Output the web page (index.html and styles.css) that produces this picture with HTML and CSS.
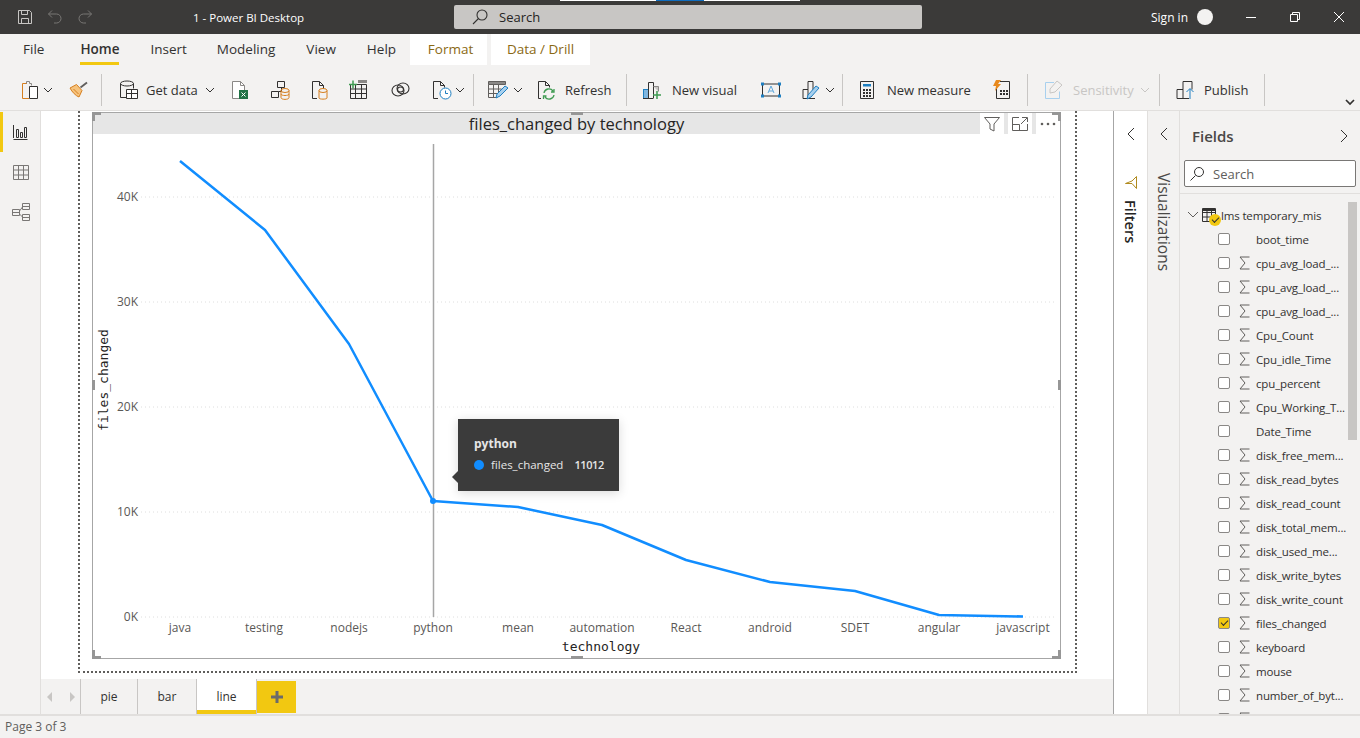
FILE: index.html
```html
<!DOCTYPE html>
<html lang="en">
<head>
    <meta charset="UTF-8">
    <title>1 - Power BI Desktop</title>
    <link rel="stylesheet" href="styles.css">
</head>
<body>
    <div class="titlebar">
        <div class="quick">
            <svg width="16" height="16" viewBox="0 0 16 16" fill="none" stroke="#c8c6c4"><path d="M1.500 1.500h11l2 2v11h-13z"/><path d="M4.500 1.500v4h6v-4M4.500 14.500v-5h7v5"/></svg>
            <svg width="16" height="16" viewBox="0 0 16 16" fill="none" stroke="#797775"><path d="M5 1.500 1.500 5 5 8.500M1.500 5h8a4.500 4.500 0 0 1 0 9H7"/></svg>
            <svg width="16" height="16" viewBox="0 0 16 16" fill="none" stroke="#797775"><path d="M11 1.500 14.500 5 11 8.500M14.500 5h-8a4.500 4.500 0 0 0 0 9H9"/></svg>
        </div>
        <div class="app-title">1 - Power BI Desktop</div>
        <div class="search-bar">
            <div class="capture-strip"><span></span></div>
            <svg width="16" height="16" viewBox="0 0 16 16" fill="none" stroke="#323130" stroke-width="1.100"><circle cx="10" cy="6" r="5"/><path d="M6.500 9.500 1 15"/></svg>
            <span>Search</span>
        </div>
        <div class="signin">Sign in <i class="avatar"></i></div>
        <div class="win-btns">
            <svg width="12" height="12" viewBox="0 0 12 12" stroke="#fff" fill="none"><path d="M1 6.500h10"/></svg>
            <svg width="12" height="12" viewBox="0 0 12 12" stroke="#fff" fill="none"><path d="M1.500 3.500h7v7h-7zM3.500 3.500v-2h7v7h-2"/></svg>
            <svg width="12" height="12" viewBox="0 0 12 12" stroke="#fff" fill="none"><path d="M1 1l10 10M11 1 1 11"/></svg>
        </div>
    </div>

    <div class="tabs">
        <a class="tab tab-file">File</a>
        <a class="tab tab-home active">Home</a>
        <a class="tab tab-insert">Insert</a>
        <a class="tab tab-model">Modeling</a>
        <a class="tab tab-view">View</a>
        <a class="tab tab-help">Help</a>
        <a class="ctx-tab ctx-format">Format</a>
        <a class="ctx-tab ctx-drill">Data / Drill</a>
    </div>

    <div class="ribbon">
        <div class="rb-group group-clip">
            <svg class="ic" width="18" height="20" viewBox="0 0 18 20" fill="none"><path d="M6 3.500H1.500v15H8" stroke="#d67f1f"/><path d="M5.500 3.500V1.500h3v2h2v2" stroke="#8a8886"/><path d="M8.500 6.500h8v12h-8z" stroke="#323130" fill="#fff"/></svg>
            <svg class="chev" width="10" height="6" viewBox="0 0 10 6"><path d="M1 1l4 4 4-4" fill="none" stroke="#323130"/></svg>
            <svg class="ic brush" width="19" height="17" viewBox="0 0 19 17" fill="none"><path d="M18 1.500 11.500 6.500" stroke="#605e5c" stroke-width="1.800"/><path d="M1 7 7.500 3.500 13 9.500 10 16C7 15 3 11 1 7z" fill="#f6c37d" stroke="#d67f1f"/><path d="M4.500 8l5 5" stroke="#d67f1f"/></svg>
        </div>
        <i class="sep"></i>
        <div class="rb-group group-data">
            <div class="rb-btn getdata">
                <svg class="ic" width="19" height="20" viewBox="0 0 19 20" fill="none" stroke="#323130"><ellipse cx="8" cy="3.500" rx="6.500" ry="2.500"/><path d="M1.500 3.500v14h6M14.500 3.500v5"/><path d="M7.500 9.500h11v9h-11zM7.500 13.500h11M12.500 9.500v9" fill="#fff"/></svg>
                <span>Get data</span>
                <svg class="chev" width="10" height="6" viewBox="0 0 10 6"><path d="M1 1l4 4 4-4" fill="none" stroke="#323130"/></svg>
            </div>
            <div class="icon-btn">
                <svg width="18" height="20" viewBox="0 0 18 20" fill="none"><path d="M1.500 1.500h8l4 4v13h-12z" stroke="#8a8886" fill="#fff"/><path d="M9.500 1.500v4h4" stroke="#8a8886"/><rect x="8" y="10" width="9" height="9" fill="#217346"/><path d="M10.500 12.500l4 4M14.500 12.500l-4 4" stroke="#fff"/></svg>
            </div>
            <div class="icon-btn">
                <svg width="20" height="20" viewBox="0 0 20 20" fill="none"><path d="M7.500 1.500h7v6h-7zM1.500 11.500h7v6h-7zM8.500 11.500h3v-4" stroke="#323130"/><ellipse cx="15" cy="10.500" rx="4" ry="2" stroke="#d67f1f"/><path d="M11 10.500v7c0 2.500 8 2.500 8 0v-7M11 14c0 2 8 2 8 0" stroke="#d67f1f"/></svg>
            </div>
            <div class="icon-btn">
                <svg width="18" height="20" viewBox="0 0 18 20" fill="none"><path d="M6 18.500H1.500v-17h7l4 4v3" stroke="#323130"/><path d="M8.500 1.500v4h4" stroke="#323130"/><ellipse cx="12" cy="10.500" rx="4" ry="2" stroke="#d67f1f"/><path d="M8 10.500v7.500c0 1.500 8 1.500 8 0v-7.500" stroke="#d67f1f"/></svg>
            </div>
            <div class="icon-btn shift-left">
                <svg width="19" height="19" viewBox="0 0 19 19" fill="none"><path d="M1.500 4.500h16v14h-16zM1.500 9h16M1.500 13.500h16M6.500 4.500v14M12.500 4.500v14" stroke="#323130"/><path d="M9 1.500h9" stroke="#8a8886" stroke-width="3"/><path d="M0 4.500h8M4 .5v8" stroke="#3f9b52" stroke-width="1.500"/></svg>
            </div>
            <div class="icon-btn">
                <svg width="19" height="15" viewBox="0 0 19 15" fill="none" stroke="#323130" stroke-width="1.100"><ellipse cx="7" cy="8.500" rx="6" ry="5.500"/><ellipse cx="12" cy="6.500" rx="6" ry="5.500"/><ellipse cx="9.500" cy="7.500" rx="3" ry="2.500"/></svg>
            </div>
            <div class="rb-btn refresh-sched">
                <svg width="20" height="20" viewBox="0 0 20 20" fill="none"><path d="M6 18.500H1.500v-17h7l4 4v2" stroke="#323130"/><path d="M8.500 1.500v4h4" stroke="#323130"/><circle cx="13.500" cy="13.500" r="5.500" stroke="#1e7fc1" fill="#fff"/><path d="M13.500 10.500v3h2.500" stroke="#1e7fc1"/></svg>
                <svg class="chev" width="10" height="6" viewBox="0 0 10 6"><path d="M1 1l4 4 4-4" fill="none" stroke="#323130"/></svg>
            </div>
        </div>
        <i class="sep"></i>
        <div class="rb-group group-query">
            <div class="rb-btn">
                <svg width="21" height="19" viewBox="0 0 21 19" fill="none"><path d="M1.500 1.500h17v3h-17z" fill="#8a8886" stroke="#605e5c"/><path d="M1.500 4.500v13h9M1.500 9h13M1.500 13.500h9M6.500 4.500v13M11.500 4.500v9" stroke="#605e5c"/><path d="M9 18l1-4 8-8 3 2-8 8z" fill="#a8d0ee" stroke="#1e7fc1"/></svg>
                <svg class="chev" width="10" height="6" viewBox="0 0 10 6"><path d="M1 1l4 4 4-4" fill="none" stroke="#323130"/></svg>
            </div>
            <div class="rb-btn refresh">
                <svg width="19" height="20" viewBox="0 0 19 20" fill="none"><path d="M4 18.500H1.500v-17h7l4 4v2" stroke="#323130"/><path d="M8.500 1.500v4h4" stroke="#323130"/><path d="M7 13a5 5 0 0 1 9-2M17 9v3h-3M17 15a5 5 0 0 1-9 2M6.500 19v-3h3" stroke="#3f9b52" stroke-width="1.300"/></svg>
                <span>Refresh</span>
            </div>
        </div>
        <i class="sep"></i>
        <div class="rb-group group-insert">
            <div class="rb-btn newvisual">
                <svg width="20" height="20" viewBox="0 0 20 20" fill="none"><rect x=".5" y="9.500" width="5" height="9" fill="#7fb6e0" stroke="#1e7fc1"/><path d="M5.500 18.500v-16h5v16" stroke="#323130"/><path d="M10.500 6.500h5v5" stroke="#8a8886" fill="#c8c6c4"/><path d="M14 11v8M10 15h8" stroke="#3f9b52" stroke-width="1.500"/><path d="M0 18.500h10" stroke="#323130"/></svg>
                <span>New visual</span>
            </div>
            <div class="icon-btn textbox">
                <svg width="20" height="16" viewBox="0 0 20 16" fill="none"><path d="M1.500 2h17v12h-17z" stroke="#323130"/><rect width="3" height="3" y=".5" fill="#1e7fc1"/><rect x="17" y=".5" width="3" height="3" fill="#1e7fc1"/><rect y="12.500" width="3" height="3" fill="#1e7fc1"/><rect x="17" y="12.500" width="3" height="3" fill="#1e7fc1"/><path d="M7 11 10 4l3 7M8 9h4" stroke="#5ea7dc"/></svg>
            </div>
            <div class="rb-btn editvisual">
                <svg width="19" height="20" viewBox="0 0 19 20" fill="none"><path d="M1 18.500V9.500h5v9zM6 9.500v-8h5v9M1 18.500h12" stroke="#323130"/><path d="M5 19l1-4 8-9 3 2-8 9z" fill="#a8d0ee" stroke="#1e7fc1"/></svg>
                <svg class="chev" width="10" height="6" viewBox="0 0 10 6"><path d="M1 1l4 4 4-4" fill="none" stroke="#323130"/></svg>
            </div>
        </div>
        <i class="sep"></i>
        <div class="rb-group group-calc">
            <div class="rb-btn measure">
                <svg width="14" height="18" viewBox="0 0 14 18" fill="none"><path d="M.5.500h13v17H.5z" stroke="#323130"/><path d="M3 3h8v2.500H3z" fill="#1e7fc1"/><path d="M3 8h2v2H3zM6 8h2v2H6zM9 8h2v2H9zM3 11h2v2H3zM6 11h2v2H6zM9 11h2v2H9zM3 14h2v2H3zM6 14h2v2H6zM9 14h2v2H9z" fill="#323130"/></svg>
                <span>New measure</span>
            </div>
            <div class="icon-btn quickmeasure">
                <svg width="18" height="19" viewBox="0 0 18 19" fill="none"><path d="M4.500 6.500v12h13V1.500H8" stroke="#323130"/><path d="M8 10h2v2H8zM11 10h2v2h-2zM14 10h2v2h-2zM8 13h2v2H8zM11 13h2v2h-2zM14 13h2v2h-2z" fill="#323130"/><path d="M4 0h5L6 4h3l-6 7 1-5H1z" fill="#e8891c"/></svg>
            </div>
        </div>
        <i class="sep"></i>
        <div class="rb-group group-sens">
            <div class="rb-btn sensitivity">
                <svg width="18" height="19" viewBox="0 0 18 19" fill="none" stroke="#a8d0ee"><path d="M9 2.500H.5v16h14v-7"/><path d="M5 9l7-8 5 4-7 7-5 1z" stroke="#c8c6c4"/></svg>
                <span>Sensitivity</span>
                <svg class="chev" width="10" height="6" viewBox="0 0 10 6"><path d="M1 1l4 4 4-4" fill="none" stroke="#c8c6c4"/></svg>
            </div>
        </div>
        <i class="sep"></i>
        <div class="rb-group group-share">
            <div class="rb-btn publish">
                <svg width="20" height="18" viewBox="0 0 20 18" fill="none"><path d="M1 17.500v-9h6v9zM7 8.500V.5h9v8M7 17.500h6" stroke="#323130"/><path d="M14 18V8M10.500 11 14 7.500l3.500 3.500" stroke="#1e7fc1"/></svg>
                <span>Publish</span>
            </div>
        </div>
        <i class="sep"></i>
        <svg class="collapse" width="10" height="7" viewBox="0 0 10 7"><path d="M1 1l4 4 4-4" fill="none" stroke="#323130" stroke-width="1.700"/></svg>
    </div>

    <div class="main">
        <div class="sidebar">
            <div class="side-btn active">
                <svg width="15" height="15" viewBox="0 0 15 15" fill="none" stroke="#323130"><path d="M.5 0v13M.5 14.500h14M3.500 4.500h2v8h-2zM7.500 7.500h2v5h-2zM11.500 2.500h2v10h-2z"/></svg>
            </div>
            <div class="side-btn">
                <svg width="16" height="15" viewBox="0 0 16 15" fill="none" stroke="#797775"><path d="M.5.500h15v14H.5zM.5 5h15M.5 10h15M5.500.5v14M10.500.5v14"/></svg>
            </div>
            <div class="side-btn">
                <svg width="18" height="18" viewBox="0 0 18 18" fill="none" stroke="#797775"><path d="M.5 6.500h7v6h-7zM10.500.5h7v6h-7zM10.500 11.500h7v6h-7zM.5 9.500h7M10.500 3.500h7M10.500 14.500h7M7.500 8l3-4M7.500 11l3 3"/></svg>
            </div>
        </div>

        <div class="workspace">
            <div class="canvas">
                <div class="page">
                    <div class="visual">
                        <div class="vis-head">
                            <div class="vis-title">files_changed by technology</div>
                            <div class="vis-icons">
                                <span class="vis-ic"><svg width="16" height="16" viewBox="0 0 16 16" fill="none" stroke="#605e5c"><path d="M.5 1.500h15L10 8v7l-4-2V8z"/></svg></span>
                                <span class="vis-ic"><svg width="16" height="14" viewBox="0 0 16 14" fill="none" stroke="#605e5c"><path d="M7 .5H.5v13h15V7M.5 7.500h7v6M10 .5h5.500V5M15 1 9 7"/></svg></span>
                                <span class="vis-ic"><svg width="16" height="4" viewBox="0 0 16 4" fill="#605e5c"><circle cx="2" cy="2" r="1.300"/><circle cx="8" cy="2" r="1.300"/><circle cx="14" cy="2" r="1.300"/></svg></span>
                            </div>
                        </div>
                        <svg class="chart" width="968" height="524" viewBox="92 134 968 524">
                            <g class="grid">
                                <line x1="141" x2="1056" y1="197" y2="197"/>
                                <line x1="141" x2="1056" y1="302" y2="302"/>
                                <line x1="141" x2="1056" y1="407" y2="407"/>
                                <line x1="141" x2="1056" y1="512" y2="512"/>
                                <line x1="141" x2="1056" y1="617" y2="617"/>
                            </g>
                            <g class="y-labels">
                                <text x="138" y="201">40K</text>
                                <text x="138" y="306">30K</text>
                                <text x="138" y="411">20K</text>
                                <text x="138" y="516">10K</text>
                                <text x="138" y="621">0K</text>
                            </g>
                            <g class="x-labels">
                                <text x="180" y="632">java</text>
                                <text x="264" y="632">testing</text>
                                <text x="349" y="632">nodejs</text>
                                <text x="433" y="632">python</text>
                                <text x="518" y="632">mean</text>
                                <text x="602" y="632">automation</text>
                                <text x="686" y="632">React</text>
                                <text x="770" y="632">android</text>
                                <text x="855" y="632">SDET</text>
                                <text x="939" y="632">angular</text>
                                <text x="1023" y="632">javascript</text>
                            </g>
                            <text class="axis-title" x="601" y="651">technology</text>
                            <text class="axis-title" transform="translate(108 380) rotate(-90)">files_changed</text>
                            <line class="cursor" x1="433.500" x2="433.500" y1="144" y2="617"/>
                            <polyline class="series" points="180,161 265,230 349,344 433,501 518,507 602,525 686,560 770,582 855,591 939,615 1023,616.500"/>
                            <circle cx="433" cy="501" r="3" fill="#118dff"/>
                        </svg>
                        <i class="handle h-tl"></i><i class="handle h-tr"></i><i class="handle h-bl"></i><i class="handle h-br"></i>
                        <i class="mid-handle m-l"></i><i class="mid-handle m-r"></i>
                        <i class="mid-handle-h m-t"></i><i class="mid-handle-h m-b"></i>
                        <div class="tooltip">
                            <div class="tip-title">python</div>
                            <div class="tip-row"><i class="tip-dot"></i><span>files_changed</span><b>11012</b></div>
                        </div>
                    </div>
                </div>
            </div>
            <div class="page-tabs">
                <div class="page-nav">
                    <svg width="6" height="10" viewBox="0 0 6 10"><path d="M5 0v10L0 5z" fill="#c8c6c4"/></svg>
                    <svg width="6" height="10" viewBox="0 0 6 10"><path d="M1 0v10l5-5z" fill="#c8c6c4"/></svg>
                </div>
                <a class="page-tab tab-pie">pie</a>
                <a class="page-tab tab-bar">bar</a>
                <a class="page-tab tab-line">line</a>
                <a class="add-page">
                    <svg width="12" height="12" viewBox="0 0 12 12"><path d="M6 0v12M0 6h12" stroke="#6b6b6b" stroke-width="3"/></svg>
                </a>
            </div>
        </div>

        <div class="pane-filters">
            <svg class="pane-chev" width="8" height="14" viewBox="0 0 8 14"><path d="M7 1 1 7l6 6" fill="none" stroke="#323130"/></svg>
            <svg class="funnel" width="12" height="13" viewBox="0 0 12 13" fill="none" stroke="#b08a1e"><path d="M11.500.5v12L7 7.500H.5L7 5z"/></svg>
            <div class="vert-label strong">Filters</div>
        </div>
        <div class="pane-viz">
            <svg class="pane-chev" width="8" height="14" viewBox="0 0 8 14"><path d="M7 1 1 7l6 6" fill="none" stroke="#323130"/></svg>
            <div class="vert-label">Visualizations</div>
        </div>

        <div class="pane-fields">
            <div class="fields-head">
                <span>Fields</span>
                <svg width="8" height="14" viewBox="0 0 8 14"><path d="M1 1l6 6-6 6" fill="none" stroke="#323130"/></svg>
            </div>
            <div class="field-search">
                <svg width="14" height="14" viewBox="0 0 14 14" fill="none" stroke="#323130"><circle cx="9" cy="5" r="4.500"/><path d="M5.500 8.500 .5 13.500"/></svg>
                <span>Search</span>
            </div>
            <div class="field-tree">
                <div class="table-row">
                    <svg width="12" height="8" viewBox="0 0 12 8"><path d="M1 1l5 5 5-5" fill="none" stroke="#605e5c"/></svg>
                    <span class="table-ic">
                        <svg width="14" height="14" viewBox="0 0 14 14" fill="none" stroke="#323130"><path d="M.5.500h13v13H.5zM.5 4.500h13M.5 9h13M5 .5v13M9.500.5v13"/><path d="M.5 2h13" stroke-width="2"/></svg>
                        <i class="table-badge"></i>
                    </span>
                    <span>lms temporary_mis</span>
                </div>
                <div id="fieldRows"></div>
                <div class="scroll-thumb"></div>
            </div>
        </div>
    </div>

    <div class="statusbar">Page 3 of 3</div>

    <script src="fields.js"></script>
</body>
</html>
```

FILE: fields.js
```js
// field list of the lms temporary_mis table: [name, has sigma, checked]
const fields = [
    ['boot_time', false], ['cpu_avg_load_...', true], ['cpu_avg_load_...', true],
    ['cpu_avg_load_...', true], ['Cpu_Count', true], ['Cpu_idle_Time', true],
    ['cpu_percent', true], ['Cpu_Working_T...', true], ['Date_Time', false],
    ['disk_free_mem...', true], ['disk_read_bytes', true], ['disk_read_count', true],
    ['disk_total_mem...', true], ['disk_used_me...', true], ['disk_write_bytes', true],
    ['disk_write_count', true], ['files_changed', true, true], ['keyboard', true],
    ['mouse', true], ['number_of_byt...', true], ['', true]
];

const sigmaIcon = '<svg width="11" height="14" viewBox="0 0 11 14" fill="none" stroke="#605e5c"><path d="M10.500 1H1l5 6-5 6h9.500"/></svg>';

const box = document.getElementById('fieldRows');
fields.forEach(function (f) {
    const row = document.createElement('div');
    row.className = 'field-row';
    const check = document.createElement('i');
    check.className = f[2] ? 'check checked' : 'check';
    const sigma = document.createElement('span');
    sigma.className = 'sigma';
    sigma.innerHTML = f[1] ? sigmaIcon : '';
    const name = document.createElement('span');
    name.innerText = f[0];
    row.append(check, sigma, name);
    box.appendChild(row);
});
```

FILE: styles.css
```css
* { box-sizing: border-box; }
html, body { height: 100%; }
body { margin: 0; height: 738px; overflow: hidden; display: flex; flex-direction: column; background: #f3f2f1; color: #323130; font-family: "Open Sans", "Noto Sans", sans-serif; font-size: 13px; }
i { display: block; }
svg { display: block; flex: none; }

/* title bar */
.titlebar { height: 34px; flex: none; background: #3b3a39; color: #fff; display: flex; align-items: center; }
.quick { display: flex; gap: 14px; margin-left: 17px; width: 176px; }
.app-title { width: 261px; font-size: 11.500px; }
.search-bar { position: relative; width: 468px; height: 24px; background: #c8c6c4; border-radius: 2px; display: flex; align-items: center; gap: 11px; padding-left: 18px; color: #252423; }
.capture-strip { position: absolute; top: -5px; left: 106px; width: 240px; height: 1px; background: #fff; }
.capture-strip span { display: block; margin-left: 96px; width: 48px; height: 1px; background: #0f6cbd; }
.signin { margin-left: 229px; width: 78px; display: flex; align-items: center; gap: 9px; font-size: 12px; }
.avatar { width: 16px; height: 16px; border-radius: 50%; background: #f3f2f1; }
.win-btns { margin-left: 16px; display: flex; gap: 32px; }

/* ribbon tabs */
.tabs { height: 31px; flex: none; display: flex; }
.tab { line-height: 31px; font-size: 13.500px; position: relative; }
.tab-file { margin-left: 23px; }
.tab-home { margin-left: 36px; font-weight: 600; }
.tab-home.active::after { content: ""; position: absolute; left: 0; right: 0; bottom: 0; height: 3px; background: #f2c811; }
.tab-insert { margin-left: 31px; }
.tab-model { margin-left: 30px; }
.tab-view { margin-left: 31px; }
.tab-help { margin-left: 31px; }
.ctx-tab { background: #fff; line-height: 31px; color: #8a6914; font-size: 13.500px; text-align: center; }
.ctx-format { margin-left: 14px; width: 77px; padding-left: 4px; }
.ctx-drill { margin-left: 4px; width: 99px; }

/* ribbon */
.ribbon { height: 46px; flex: none; display: flex; align-items: center; border-bottom: 1px solid #e1dfdd; padding-top: 4px; position: relative; }
.rb-group { display: flex; align-items: center; }
.rb-btn { display: flex; align-items: center; }
.rb-btn span { font-size: 13px; }
.icon-btn { width: 40px; display: flex; justify-content: center; }
.shift-left { margin-left: -2px; margin-right: 2px; }
.chev { margin-left: 5px; }
.sep { width: 1px; height: 32px; background: #c8c6c4; flex: none; }
.group-clip { margin-left: 21px; width: 80px; }
.group-clip .chev { margin-left: 4px; }
.brush { margin-left: 16px; }
.group-data { margin-left: 17px; width: 354px; }
.getdata { gap: 8px; width: 101px; }
.getdata .chev { margin-left: -1px; }
.refresh-sched { margin-left: 12px; }
.refresh-sched .chev { margin-left: 3px; }
.group-query { margin-left: 13px; width: 139px; }
.refresh { margin-left: 14px; gap: 9px; }
.group-insert { margin-left: 16px; width: 199px; }
.newvisual { gap: 9px; }
.textbox { margin-left: 14px; }
.editvisual { margin-left: 11px; }
.editvisual .chev { margin-left: 4px; }
.group-calc { margin-left: 17px; width: 167px; }
.measure { gap: 13px; }
.quickmeasure { margin-left: 10px; }
.group-sens { margin-left: 17px; width: 114px; }
.sensitivity { gap: 10px; color: #c8c6c4; }
.sensitivity .chev { margin-left: -4px; }
.group-share { margin-left: 16px; width: 88px; }
.publish { gap: 8px; }
.collapse { margin-left: 80px; margin-top: 25px; }

/* main area */
.main { flex: 1; min-height: 0; display: flex; }
.sidebar { width: 41px; flex: none; border-right: 1px solid #e1dfdd; padding: 1px 0 0 1px; }
.side-btn { height: 40px; display: flex; align-items: center; justify-content: center; }
.side-btn.active { box-shadow: -1px 0 0 #f2c811, inset 2px 0 0 #f2c811; }
.workspace { flex: none; width: 1073px; display: flex; flex-direction: column; border-right: 1px solid #a6a6a6; }
.canvas { flex: 1; min-height: 0; background: #fff; overflow: hidden; padding: 0 36px 6px 37px; }
.page { height: 562px; border: 2px dotted #605e5c; border-top: 0; padding: 1px 14px 0 12px; }

/* visual */
.visual { position: relative; height: 547px; border: 1px solid #a6a6a6; }
.vis-head { position: relative; height: 21px; background: #e6e6e6; }
.vis-title { text-align: center; font-size: 16.500px; color: #252423; line-height: 22px; }
.vis-icons { position: absolute; right: 0; top: 0; bottom: 0; display: flex; gap: 4px; }
.vis-ic { width: 24px; background: #fff; display: flex; align-items: center; justify-content: center; }
.chart { margin-left: -1px; }
.grid line { stroke: #dedede; stroke-dasharray: 1 3; }
.y-labels text { text-anchor: end; font-size: 12px; fill: #5a5856; }
.x-labels text { text-anchor: middle; font-size: 12px; fill: #5a5856; }
.axis-title { text-anchor: middle; font-family: "DejaVu Sans Mono", monospace; font-size: 13px; fill: #252423; }
.cursor { stroke: #a6a6a6; stroke-width: 1.500; }
.series { fill: none; stroke: #118dff; stroke-width: 2.500; stroke-linejoin: round; }
.handle { position: absolute; width: 9px; height: 9px; border: solid #969696; }
.h-tl { left: -1px; top: -1px; border-width: 3px 0 0 3px; }
.h-tr { right: -1px; top: -1px; border-width: 3px 3px 0 0; }
.h-bl { left: -1px; bottom: -1px; border-width: 0 0 3px 3px; }
.h-br { right: -1px; bottom: -1px; border-width: 0 3px 3px 0; }
.mid-handle { position: absolute; top: 267px; width: 3px; height: 10px; background: #969696; }
.m-l { left: -1px; }
.m-r { right: -1px; }
.mid-handle-h { position: absolute; left: 478px; width: 12px; height: 3px; background: #969696; }
.m-t { top: -1px; }
.m-b { bottom: -1px; }

/* tooltip over the chart */
.tooltip { position: absolute; left: 365px; top: 306px; width: 161px; height: 72px; background: #3b3b3b; color: #e6e6e6; padding: 17px 16px 0; box-shadow: 0 2px 10px rgba(0, 0, 0, .15); font-size: 11.500px; }
.tooltip::before { content: ""; position: absolute; left: -6px; top: 52px; border: 6px solid transparent; border-left: 0; border-right-color: #3b3b3b; }
.tip-title { font-weight: 700; font-size: 12px; line-height: 16px; }
.tip-row { display: flex; align-items: center; margin-top: 5px; line-height: 16px; }
.tip-dot { width: 10px; height: 10px; border-radius: 50%; background: #118dff; margin-right: 7px; flex: none; }
.tip-row b { margin-left: 11px; font-weight: 600; font-size: 11px; letter-spacing: -.4px; }

/* page tabs */
.page-tabs { height: 35px; flex: none; display: flex; align-items: stretch; background: #f3f2f1; }
.page-nav { width: 40px; display: flex; gap: 16px; align-items: center; padding-left: 6px; border-right: 1px solid #c8c6c4; }
.page-tab { display: block; text-align: center; line-height: 35px; font-size: 12px; border-right: 1px solid #c8c6c4; }
.tab-pie { width: 57px; }
.tab-bar { width: 59px; }
.tab-line { width: 60px; background: #fff; box-shadow: inset 0 -4px 0 #f2c811; border-right: 1px solid #c8c6c4; }
.add-page { width: 39px; height: 32px; margin-top: 2px; background: #f2c811; display: flex; align-items: center; justify-content: center; }

/* side panes */
.pane-filters { width: 33px; flex: none; background: #fff; display: flex; flex-direction: column; align-items: center; padding-top: 16px; }
.pane-viz { width: 33px; flex: none; background: #f3f2f1; border-left: 1px solid #e1dfdd; border-right: 1px solid #e1dfdd; display: flex; flex-direction: column; align-items: center; padding-top: 16px; }
.funnel { margin-top: 35px; }
.vert-label { writing-mode: vertical-rl; font-size: 15.500px; margin-top: 32px; color: #4a4846; }
.pane-filters .vert-label { margin-top: 11px; font-size: 14.500px; color: #252423; }
.strong { font-weight: 600; }
.pane-fields { flex: 1; min-width: 0; display: flex; flex-direction: column; }
.fields-head { display: flex; justify-content: space-between; align-items: center; height: 49px; padding: 0 12px 0 12px; font-size: 15px; font-weight: 600; color: #4a4846; }
.field-search { margin: 0 4px; height: 27px; background: #fff; border: 1px solid #797775; border-radius: 2px; display: flex; align-items: center; gap: 9px; padding-left: 5px; font-size: 13px; color: #605e5c; flex: none; }
.field-tree { position: relative; margin-top: 6px; border-top: 1px solid #e1dfdd; padding: 9px 0 0 7px; flex: 1; min-height: 0; overflow: hidden; font-size: 11.500px; letter-spacing: -.15px; }
.table-row { display: flex; align-items: center; height: 24px; }
.table-ic { position: relative; margin-left: 3px; margin-right: 5px; }
.table-badge { position: absolute; left: 7px; top: 6px; width: 12px; height: 12px; border-radius: 50%; background: #f2c811; }
.table-badge::after { content: ""; position: absolute; left: 3px; top: 3px; width: 6px; height: 3px; border: solid #323130; border-width: 0 0 1.500px 1.500px; transform: rotate(-45deg); }
.field-row { display: flex; align-items: center; height: 24px; padding-left: 31px; white-space: nowrap; }
.check { width: 12px; height: 12px; border: 1px solid #8a8886; border-radius: 2px; background: #fff; flex: none; }
.check.checked { background: #f2c811; position: relative; }
.check.checked::after { content: ""; position: absolute; left: 2px; top: 2px; width: 6px; height: 3px; border: solid #323130; border-width: 0 0 1px 1px; transform: rotate(-45deg); }
.sigma { width: 26px; padding-left: 9px; flex: none; }
.scroll-thumb { position: absolute; left: 168px; top: 8px; width: 9px; height: 238px; background: #c8c6c4; }

.statusbar { height: 24px; flex: none; border-top: 2px solid #e1dfdd; padding-left: 5px; line-height: 22px; font-size: 12px; color: #605e5c; }
```
